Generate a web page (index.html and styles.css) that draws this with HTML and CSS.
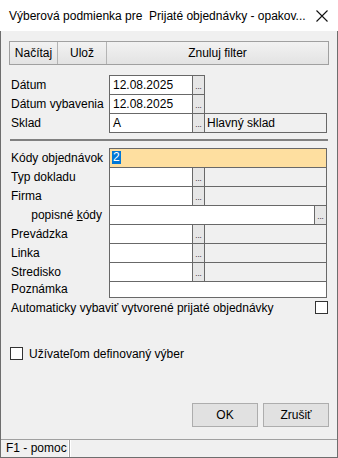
FILE: index.html
```html
<!DOCTYPE html>
<html lang="sk">
<head>
    <meta charset="UTF-8">
    <title>Výberová podmienka</title>
    <link rel="stylesheet" href="styles.css">
</head>
<body>
<div class="window">
    <div class="titlebar">
        <span class="title">Výberová podmienka pre  Prijaté objednávky - opakov...</span>
        <svg class="close" width="12" height="12" viewBox="0 0 12 12">
            <path d="M0.5 0.5 L11.5 11.5 M11.5 0.5 L0.5 11.5" stroke="#111" stroke-width="1.1" fill="none"/>
        </svg>
    </div>

    <div class="client">
        <!-- toolbar -->
        <div class="toolbar">
            <button class="tb-btn tb-load">Načítaj</button>
            <button class="tb-btn tb-save">Ulož</button>
            <button class="tb-btn tb-reset">Znuluj filter</button>
        </div>

        <!-- header fields -->
        <div class="form">
            <div class="row">
                <label class="lbl">Dátum</label>
                <div class="box short">12.08.2025</div>
                <div class="dots">...</div>
            </div>
            <div class="row">
                <label class="lbl">Dátum vybavenia</label>
                <div class="box short">12.08.2025</div>
                <div class="dots">...</div>
            </div>
            <div class="row">
                <label class="lbl">Sklad</label>
                <div class="box short">A</div>
                <div class="dots">...</div>
                <div class="desc">Hlavný sklad</div>
            </div>
        </div>

        <div class="separator"></div>

        <div class="form">
            <div class="row">
                <label class="lbl">Kódy objednávok</label>
                <div class="box wide active"><span class="sel">2</span></div>
            </div>
            <div class="row">
                <label class="lbl">Typ dokladu</label>
                <div class="box short"></div>
                <div class="dots">...</div>
                <div class="desc"></div>
            </div>
            <div class="row">
                <label class="lbl">Firma</label>
                <div class="box short"></div>
                <div class="dots">...</div>
                <div class="desc"></div>
            </div>
            <div class="row">
                <label class="lbl sub">popisné <u>k</u>ódy</label>
                <div class="box wide"></div>
                <div class="dots">...</div>
            </div>
            <div class="row">
                <label class="lbl">Prevádzka</label>
                <div class="box short"></div>
                <div class="dots">...</div>
                <div class="desc"></div>
            </div>
            <div class="row">
                <label class="lbl">Linka</label>
                <div class="box short"></div>
                <div class="dots">...</div>
                <div class="desc"></div>
            </div>
            <div class="row">
                <label class="lbl">Stredisko</label>
                <div class="box short"></div>
                <div class="dots">...</div>
                <div class="desc"></div>
            </div>
            <div class="row note">
                <label class="lbl">Poznámka</label>
                <div class="box wide"></div>
            </div>
        </div>

        <div class="check-row auto">
            <span>Automaticky vybaviť vytvorené prijaté objednávky</span>
            <span class="check"></span>
        </div>

        <div class="check-row user">
            <span class="check"></span>
            <span>Užívateľom definovaný výber</span>
        </div>

        <div class="actions">
            <button class="btn">OK</button>
            <button class="btn">Zrušiť</button>
        </div>

        <div class="statusbar">
            <div class="pane">F1 - pomoc</div>
            <div class="pane rest"></div>
        </div>
    </div>
</div>
</body>
</html>
```

FILE: styles.css
```css
html, body {
    margin: 0;
    padding: 0;
}
body {
    width: 338px;
    height: 458px;
    overflow: hidden;
    font-family: "Liberation Sans", Arial, sans-serif;
    font-size: 12px;
    color: #000;
}
.window {
    height: 458px;
    display: flex;
    flex-direction: column;
}
.titlebar {
    height: 31px;
    flex: none;
    background: #fff;
    display: flex;
    align-items: center;
    justify-content: space-between;
    padding: 0 10px 0 9px;
}
.title {
    white-space: pre;
    font-size: 12px;
    color: #000;
}
.close {
    display: block;
}
.client {
    flex: 1;
    background: #f0f0f0;
    border: 1px solid #6e6e6e;
    border-top: none;
    padding: 0 8px;
    display: flex;
    flex-direction: column;
}

/* toolbar */
.toolbar {
    margin-top: 10px;
    height: 24px;
    display: flex;
    border: 1px solid #a0a0a0;
    box-sizing: border-box;
}
.tb-btn {
    font: inherit;
    color: #000;
    border: none;
    border-right: 1px solid #b4b4b4;
    background: linear-gradient(#f2f2f2, #e3e3e3);
    padding: 0;
    height: 22px;
}
.tb-load { width: 48px; }
.tb-save { width: 49px; }
.tb-reset { flex: 1; border-right: none; }

/* form rows */
.form {
    margin-top: 10px;
    width: 319px;
}
.separator + .form {
    margin-top: 7px;
}
.row {
    display: flex;
    height: 20px;
    margin-top: -1px;
}
.row:first-child {
    margin-top: 0;
}
.lbl {
    width: 100px;
    flex: none;
    padding-left: 2px;
    box-sizing: border-box;
    line-height: 20px;
    white-space: nowrap;
}
.lbl.sub {
    text-align: right;
    padding-right: 7px;
}
.box {
    box-sizing: border-box;
    border: 1px solid #686868;
    background: #fff;
    height: 20px;
    line-height: 18px;
    padding-left: 3px;
    white-space: nowrap;
}
.box.short {
    width: 84px;
    flex: none;
}
.box.wide {
    flex: 1;
}
.box.active {
    background: #fedfa0;
    padding-left: 2px;
    margin-right: 1px;
}
.sel {
    display: inline-block;
    background: #0078d7;
    color: #fff;
    line-height: 13px;
    padding: 0 1px;
    vertical-align: middle;
    margin-top: -2px;
}
.dots {
    box-sizing: border-box;
    width: 13px;
    flex: none;
    height: 20px;
    margin-left: -1px;
    border: 1px solid #686868;
    background: #e6e6e6;
    font-size: 8px;
    line-height: 22px;
    text-align: center;
    overflow: hidden;
}
.row .dots:last-child {
    margin-right: 1px;
}
.desc {
    box-sizing: border-box;
    flex: 1;
    height: 20px;
    margin-left: -1px;
    margin-right: 1px;
    border: 1px solid #686868;
    background: #f0f0f0;
    line-height: 18px;
    padding-left: 2px;
    white-space: nowrap;
}
.row.note {
    height: 17px;
}
.row.note .lbl {
    line-height: 17px;
}
.row.note .box {
    height: 17px;
    margin-right: 1px;
}

.separator {
    margin: 6px 0 0 1px;
    width: 318px;
    height: 2px;
    background: #808080;
}

/* checkboxes */
.check-row {
    display: flex;
    align-items: center;
    height: 13px;
    padding-left: 2px;
    width: 317px;
}
.check {
    width: 13px;
    height: 13px;
    box-sizing: border-box;
    border: 1px solid #333;
    background: #fff;
    flex: none;
}
.check-row.auto {
    margin-top: 3px;
    justify-content: space-between;
}
.check-row.user {
    margin-top: 33px;
    padding-left: 1px;
    gap: 6px;
}

/* dialog buttons */
.actions {
    margin-top: 43px;
    display: flex;
    justify-content: flex-end;
    gap: 5px;
}
.btn {
    width: 66px;
    height: 24px;
    font: inherit;
    color: #000;
    border: 1px solid #adadad;
    background: #e1e1e1;
    padding: 0;
}

/* status bar */
.statusbar {
    margin: auto -8px 0;
    height: 17px;
    border-top: 1px solid #a0a0a0;
    display: flex;
}
.pane {
    line-height: 17px;
    padding-left: 5px;
    width: 69px;
    box-sizing: border-box;
    border-right: 1px solid #a0a0a0;
    box-shadow: inset -1px 0 0 #fff;
    white-space: nowrap;
}
.pane.rest {
    flex: 1;
    border-right: none;
    box-shadow: inset 1px 0 0 #fff;
}
```
